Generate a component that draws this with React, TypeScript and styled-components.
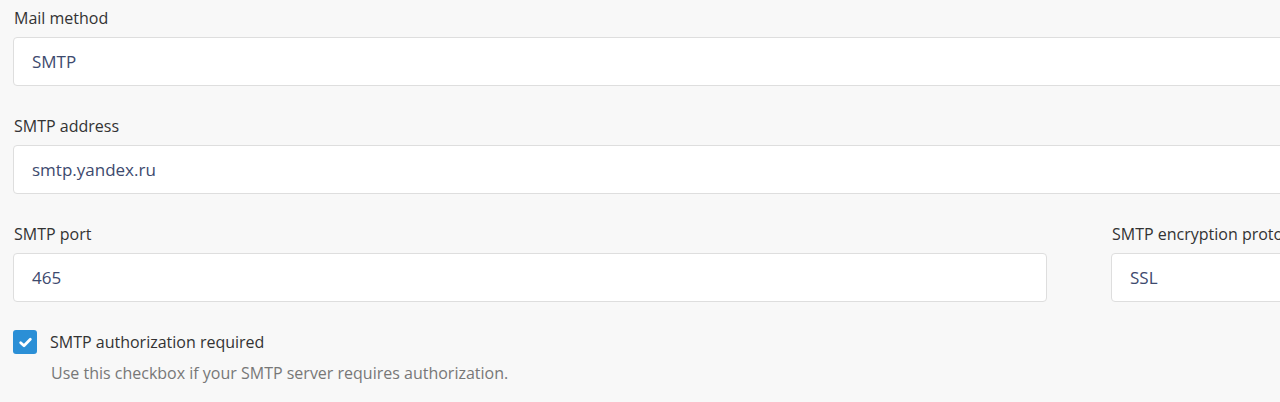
import styled, { createGlobalStyle } from 'styled-components';

const GlobalStyle = createGlobalStyle`
  body {
    margin: 0;
    background: #f8f8f8;
    font-family: "Open Sans", "Noto Sans", sans-serif;
    overflow: hidden;
  }
`;

const Page = styled.div`
  width: 2160px;
  padding: 6px 0 0 13px;
  display: flex;
  flex-direction: column;
`;

const Field = styled.div`
  display: flex;
  flex-direction: column;
  margin-bottom: 28px;
`;

const Row = styled.div`
  display: grid;
  grid-template-columns: 1034px 1034px;
  column-gap: 64px;
`;

const Label = styled.label`
  font-size: 16px;
  line-height: 24px;
  color: #333;
  margin: 0 0 7px 1px;
  white-space: nowrap;
`;

const Input = styled.div`
  height: 49px;
  box-sizing: border-box;
  background: #fff;
  border: 1px solid #dedede;
  border-radius: 4px;
  padding: 0 18px;
  display: flex;
  align-items: center;
  font-size: 17px;
  color: #3d4a6e;
`;

const CheckRow = styled.div`
  display: flex;
  align-items: center;
  gap: 13px;
  height: 24px;
`;

const Box = styled.span`
  width: 24px;
  height: 24px;
  border-radius: 3px;
  background: #2b8fd6;
  display: flex;
  align-items: center;
  justify-content: center;
`;

const CheckLabel = styled.span`
  font-size: 16px;
  color: #333;
`;

const Help = styled.div`
  font-size: 16px;
  line-height: 22px;
  color: #777;
  margin: 8px 0 0 38px;
`;

export default function App() {
  return (
    <>
      <GlobalStyle />
      <Page>
        <Field>
          <Label>Mail method</Label>
          <Input>SMTP</Input>
        </Field>
        <Field>
          <Label>SMTP address</Label>
          <Input>smtp.yandex.ru</Input>
        </Field>
        <Row>
          <Field>
            <Label>SMTP port</Label>
            <Input>465</Input>
          </Field>
          <Field>
            <Label>SMTP encryption protocol</Label>
            <Input>SSL</Input>
          </Field>
        </Row>
        <CheckRow>
          <Box>
            <svg width="15" height="15" viewBox="0 0 14 14">
              <path d="M2.5 7.2 L5.6 10 L11.5 4" fill="none" stroke="#fff" strokeWidth="2.6" strokeLinecap="round" strokeLinejoin="round" />
            </svg>
          </Box>
          <CheckLabel>SMTP authorization required</CheckLabel>
        </CheckRow>
        <Help>Use this checkbox if your SMTP server requires authorization.</Help>
      </Page>
    </>
  );
}
